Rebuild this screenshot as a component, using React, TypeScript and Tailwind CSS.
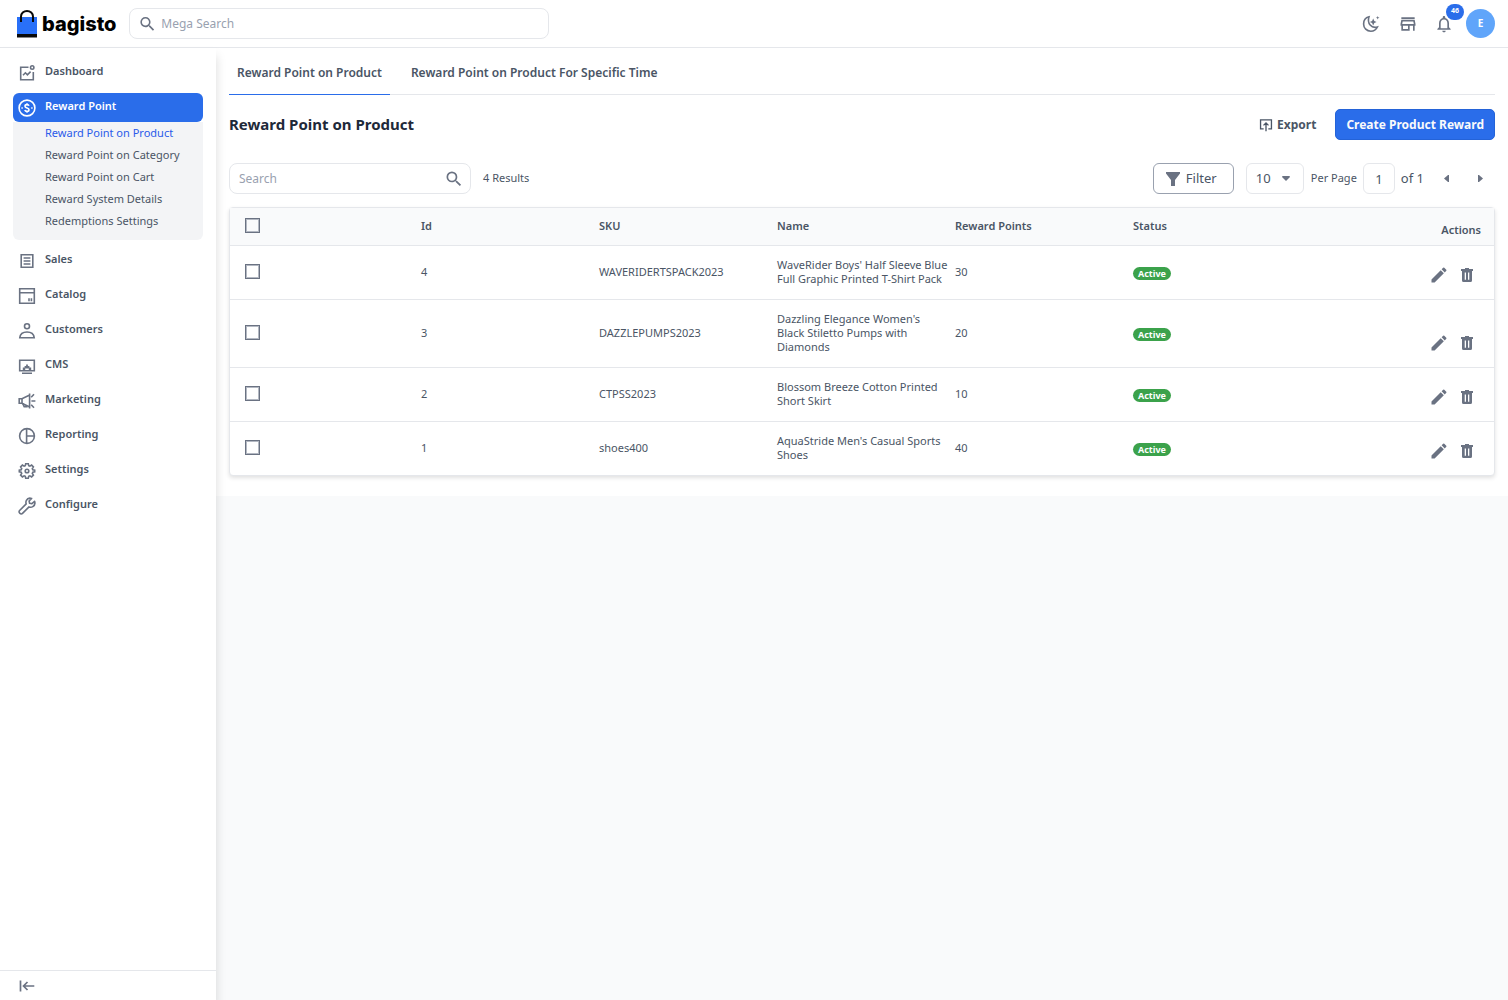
import { type ReactNode } from 'react';
import { MdEdit, MdNotificationsNone, MdOutlineStore, MdSearch } from 'react-icons/md';

interface IconProps {
    className?: string;
    children?: ReactNode;
}

function LineIcon({ className = 'size-[18px]', children }: IconProps) {
    return (
        <svg
            viewBox="0 0 18 18"
            fill="none"
            stroke="currentColor"
            strokeWidth="1.6"
            className={`shrink-0 ${className}`}
            aria-hidden="true"
        >
            {children}
        </svg>
    );
}

const menuIcons: Record<string, ReactNode> = {
    dashboard: (
        <>
            <path d="M10.500 3.200H2.700v12.600h12.600V8" />
            <path d="m5 11.200 2.400-2.400 2 2L12.600 7.600" />
            <circle cx="14.200" cy="3.500" r="1.700" />
        </>
    ),
    reward: (
        <>
            <circle cx="9" cy="9" r="7.900" />
            <path d="M11 6.800c-.3-.9-1-1.200-2-1.200-1.200 0-2 .6-2 1.600 0 2.300 4 1.200 4 3.500 0 1-.8 1.700-2 1.700-1.100 0-1.900-.4-2.200-1.300M9 4.200v1.400M9 12.400v1.400" />
            <path d="M3.400 9h1.400M13.200 9h1.400" />
        </>
    ),
    sales: (
        <>
            <path d="M3.200 2.700h11.600v12.600H3.200z" />
            <path d="M5.600 6h6.800M5.600 9h6.800M5.600 12h6.800" />
        </>
    ),
    catalog: (
        <>
            <path d="M1.700 1.700h14.600v14.600H1.700zM1.700 5.700h14.600" />
            <path d="M11 11.200v3M13.400 11.200v3" />
        </>
    ),
    customers: (
        <>
            <circle cx="9" cy="4.200" r="2.500" />
            <path d="M1.800 15.700c.4-3.600 3.200-5.700 7.200-5.700s6.800 2.100 7.200 5.700z" />
        </>
    ),
    cms: (
        <>
            <path d="M1.700 3.200h14.600v10.600H1.700zM4 16.300h10" />
            <path
                d="M4.800 13.200v-2.800h1.800V9h1.500V7.600h1.800V9h1.500v1.400h1.800v2.800h-2.400v-1.600H7.200v1.600z"
                fill="currentColor"
                stroke="none"
            />
        </>
    ),
    marketing: (
        <>
            <path d="M11.600 1.500v15M11.200 3.300 4 6.800H1.200v4.400H4l7.200 3.500" />
            <path d="M4 7v4M4.700 11.400l1.500 3.300h2.400l-.6-1.500" />
            <path d="M13.400 9h4M13.200 5.200l2.800-3M13.200 12.800l2.800 3" />
        </>
    ),
    reporting: (
        <>
            <circle cx="9" cy="9" r="7.400" />
            <path d="M8.600 1.600v14.800M8.600 9h7.600" />
        </>
    ),
    settings: (
        <>
            <path d="M7.700 1.700h2.600l.4 2 1.200.5 1.700-1.100 1.800 1.800-1.100 1.700.5 1.200 1.900.4v1.600l-1.900.4-.5 1.200 1.100 1.700-1.800 1.800-1.700-1.100-1.200.5-.4 2H7.700l-.4-2-1.200-.5-1.700 1.100-1.800-1.800 1.100-1.700-.5-1.200-1.900-.4V8.200l1.900-.4.5-1.200-1.100-1.700 1.800-1.800 1.700 1.100 1.200-.5z" />
            <circle cx="9" cy="9" r="1.800" />
        </>
    ),
    configure: (
        <path
            d="M16.600 4.300 13.900 6.700l-2.300-.5-.5-2.200L13.600 1.400c-2.200-.7-4.300.1-5.200 1.900-.6 1.200-.6 2.500-.2 3.600L1.600 13.500c-.7.700-.7 1.800 0 2.500l.4.4c.7.700 1.800.7 2.500 0l6.500-6.500c1.200.5 2.600.4 3.800-.3 1.700-1 2.500-3.200 1.800-5.300z"
            strokeLinejoin="round"
        />
    ),
};

const subItems = [
    'Reward Point on Product',
    'Reward Point on Category',
    'Reward Point on Cart',
    'Reward System Details',
    'Redemptions Settings',
];

const menu = [
    { label: 'Dashboard', icon: 'dashboard' },
    { label: 'Reward Point', icon: 'reward', children: subItems },
    { label: 'Sales', icon: 'sales' },
    { label: 'Catalog', icon: 'catalog' },
    { label: 'Customers', icon: 'customers' },
    { label: 'CMS', icon: 'cms' },
    { label: 'Marketing', icon: 'marketing' },
    { label: 'Reporting', icon: 'reporting' },
    { label: 'Settings', icon: 'settings' },
    { label: 'Configure', icon: 'configure' },
];

const rewards = [
    { id: 4, sku: 'WAVERIDERTSPACK2023', name: "WaveRider Boys' Half Sleeve Blue Full Graphic Printed T-Shirt Pack", points: 30 },
    { id: 3, sku: 'DAZZLEPUMPS2023', name: "Dazzling Elegance Women's Black Stiletto Pumps with Diamonds", points: 20 },
    { id: 2, sku: 'CTPSS2023', name: 'Blossom Breeze Cotton Printed Short Skirt', points: 10 },
    { id: 1, sku: 'shoes400', name: "AquaStride Men's Casual Sports Shoes", points: 40 },
];

function Logo() {
    return (
        <a href="#" className="flex items-center gap-1 text-black">
            <svg viewBox="0 0 22 28" className="h-7 w-[22px]" aria-hidden="true">
                <path d="M1 7h20v17H1z" fill="#2970f8" />
                <path d="M1 24h20v3.500H1z" fill="#0a0a0a" />
                <path d="M5 12V6.500a6 5.500 0 0 1 12 0V12" fill="none" stroke="#0a0a0a" strokeWidth="2" />
            </svg>
            <span className="font-[Inter,sans-serif] text-xl font-extrabold">bagisto</span>
        </a>
    );
}

function Header() {
    return (
        <header className="flex h-12 items-center justify-between border-b border-gray-200 bg-white pr-[13px] pl-4">
            <div className="flex items-center gap-[13px]">
                <Logo />
                <label className="flex h-[31px] w-[420px] items-center gap-1 rounded-lg border border-gray-200 px-2">
                    <MdSearch className="size-5 text-gray-500" />
                    <input
                        type="text"
                        aria-label="Mega Search"
                        placeholder="Mega Search"
                        className="w-full text-xs text-gray-600 outline-none placeholder:text-gray-400"
                    />
                </label>
            </div>

            <div className="flex items-center text-gray-500">
                <button type="button" aria-label="Dark mode" className="mr-[18px]">
                    <LineIcon>
                        <path d="M7 1.800C3.600 2.600 1.600 5.500 1.600 9c0 4.200 3.200 7.200 7.200 7.200 3 0 5.400-1.600 6.600-4.200C9.500 13.600 4.800 8.500 7 1.800z" />
                        <path
                            d="m11.200 3.600 1.100 2.300 2.300 1.100-2.300 1.100-1.100 2.300-1.100-2.300L7.800 7l2.300-1.100z"
                            fill="currentColor"
                            stroke="none"
                        />
                        <path d="m15.700 1 .5 1.300 1.300.5-1.300.5-.5 1.300-.5-1.300-1.300-.5 1.300-.5z" fill="currentColor" stroke="none" />
                    </LineIcon>
                </button>
                <button type="button" aria-label="Visit shop" className="mr-4">
                    <MdOutlineStore className="size-5" />
                </button>
                <button type="button" aria-label="Notifications" className="relative mr-3">
                    <MdNotificationsNone className="size-5" />
                    <span className="absolute -top-[10px] left-3 flex h-4 w-[18px] items-center justify-center rounded-full bg-[#2a6dea] text-[7px] font-bold text-white">
                        46
                    </span>
                </button>
                <button
                    type="button"
                    className="size-[29px] rounded-full bg-[#60a5fa] text-[10px] font-bold text-white"
                >
                    E
                </button>
            </div>
        </header>
    );
}

function Sidebar() {
    return (
        <aside className="z-10 flex w-[216px] shrink-0 flex-col justify-between bg-white shadow-[0_8px_10px_rgba(0,0,0,0.15)]">
            <nav className="flex flex-col gap-[6px] px-[13px] pt-[10px]">
                {menu.map((item) => (
                    <div key={item.label}>
                        <a
                            href="#"
                            className={`flex h-[29px] items-center gap-[9px] rounded-md px-[5px] text-[11px] font-semibold ${
                                item.children ? 'bg-[#2a6dea] text-white' : 'text-gray-600'
                            }`}
                        >
                            <LineIcon className={item.children ? 'size-[18px]' : 'size-[18px] text-gray-500'}>
                                {menuIcons[item.icon]}
                            </LineIcon>
                            <span className="pb-[3px]">{item.label}</span>
                        </a>
                        {item.children && (
                            <div className="flex flex-col rounded-b-md bg-gray-100 pb-2 pl-8 text-[11px]">
                                {item.children.map((child, i) => (
                                    <a
                                        key={child}
                                        href="#"
                                        className={`flex h-[22px] items-center ${i === 0 ? 'text-[#2a5bea]' : 'text-gray-600'}`}
                                    >
                                        {child}
                                    </a>
                                ))}
                            </div>
                        )}
                    </div>
                ))}
            </nav>
            <div className="border-t border-gray-200 px-[18px] pt-[6px] pb-[5px] text-gray-500">
                <button type="button" aria-label="Collapse menu" className="block">
                    <LineIcon>
                        <path d="M2.500 3.500v11M16.300 9H5.500M9.500 5 5.500 9l4 4" strokeWidth="1.700" />
                    </LineIcon>
                </button>
            </div>
        </aside>
    );
}

function Toolbar() {
    return (
        <div className="mt-[23px] flex items-center justify-between">
            <div className="flex items-center gap-3">
                <label className="flex h-[31px] w-[242px] items-center rounded-lg border border-gray-200 pr-[6px] pl-[9px]">
                    <input
                        type="text"
                        aria-label="Search"
                        placeholder="Search"
                        className="w-full text-xs text-gray-600 outline-none placeholder:text-gray-400"
                    />
                    <MdSearch className="size-5 shrink-0 text-gray-500" />
                </label>
                <p className="text-[11px]">4 Results</p>
            </div>

            <div className="flex items-center text-[13px]">
                <button
                    type="button"
                    className="flex h-[31px] w-[81px] items-center justify-center gap-[6px] rounded-md border border-gray-400 pr-1"
                >
                    <svg viewBox="0 0 14 14" className="size-[14px] text-gray-500" aria-hidden="true">
                        <path d="M0 0h14v1.600L9 8v6H5V8L0 1.600z" fill="currentColor" />
                    </svg>
                    Filter
                </button>
                <div className="relative ml-3">
                    <select
                        aria-label="Rows per page"
                        className="h-[31px] w-[58px] appearance-none rounded-md border border-gray-200 bg-white pl-[9px]"
                    >
                        <option>10</option>
                        <option>20</option>
                        <option>50</option>
                    </select>
                    <svg
                        viewBox="0 0 8 5"
                        className="pointer-events-none absolute top-[13px] right-[14px] h-[5px] w-2 text-gray-500"
                        aria-hidden="true"
                    >
                        <path d="M0 1q0-1 1-1h6q1 0 1 1L4 5z" fill="currentColor" />
                    </svg>
                </div>
                <label htmlFor="page" className="ml-[7px] text-[11px]">
                    Per Page
                </label>
                <input
                    id="page"
                    type="text"
                    defaultValue="1"
                    className="ml-[6px] h-[31px] w-8 rounded-md border border-gray-200 text-center outline-none"
                />
                <span className="ml-[6px]">of 1</span>
                <button type="button" aria-label="Previous page" className="ml-[15px] flex size-[14px] items-center justify-center">
                    <svg viewBox="0 0 5 7" className="h-[7px] w-[5px] text-gray-500" aria-hidden="true">
                        <path d="M5 0v7H4L0 3.500 4 0z" fill="currentColor" />
                    </svg>
                </button>
                <button type="button" aria-label="Next page" className="mr-2 ml-5 flex size-[14px] items-center justify-center">
                    <svg viewBox="0 0 5 7" className="h-[7px] w-[5px] text-gray-500" aria-hidden="true">
                        <path d="M0 0v7h1l4-3.500L1 0z" fill="currentColor" />
                    </svg>
                </button>
            </div>
        </div>
    );
}

function Checkbox({ label }: { label: string }) {
    return (
        <input
            type="checkbox"
            aria-label={label}
            className="block size-[15px] appearance-none border border-gray-500 shadow-[inset_0_0_0_1px_#b3b8c2] checked:bg-[#2a6dea]"
        />
    );
}

function TrashIcon() {
    return (
        <svg viewBox="0 0 12 14" className="h-[14px] w-3" aria-hidden="true">
            <path
                d="M4 0h4v1h4v2H0V1h4zM1 3h10v9.500q0 1.500-1.500 1.500h-7Q1 14 1 12.500zM3.700 4.500v7.200H5V4.500zM7 4.500v7.200h1.300V4.500z"
                fill="currentColor"
                fillRule="evenodd"
            />
        </svg>
    );
}

function RewardTable() {
    return (
        <div className="mt-[13px] rounded-sm border border-gray-200 bg-white shadow-[0_2px_4px_rgba(0,0,0,0.12)]">
            <table className="w-full table-fixed border-separate border-spacing-0 text-left text-[11px] leading-[14px]">
                <thead>
                    <tr className="h-[38px] bg-gray-50 [&>th]:border-b [&>th]:border-gray-200 [&>th]:pb-[2px] [&>th]:font-semibold">
                        <th className="pl-[15px]">
                            <Checkbox label="Select all" />
                        </th>
                        <th className="pl-[13px]">Id</th>
                        <th className="pl-[13px]">SKU</th>
                        <th className="w-[191px] pl-[13px]">Name</th>
                        <th className="w-[165px]">Reward Points</th>
                        <th className="pl-[13px]">Status</th>
                        <th className="w-[196px] pt-2 pr-[13px] text-right">Actions</th>
                    </tr>
                </thead>
                <tbody>
                    {rewards.map((row) => (
                        <tr
                            key={row.id}
                            className="[&>td]:border-b [&>td]:border-gray-200 last:[&>td]:border-b-0"
                        >
                            <td className="pb-[2px] pl-[15px]">
                                <Checkbox label={`Select ${row.sku}`} />
                            </td>
                            <td className="pb-[2px] pl-[13px]">{row.id}</td>
                            <td className="pb-[2px] pl-[13px]">{row.sku}</td>
                            <td className="pt-3 pr-[5px] pb-[13px] pl-[13px]">{row.name}</td>
                            <td className="pb-[2px]">{row.points}</td>
                            <td className="pl-[13px]">
                                <span className="inline-block rounded-full bg-[#3ba24b] px-[5px] text-[9px] leading-[13px] font-bold text-white">
                                    Active
                                </span>
                            </td>
                            <td className="pr-[21px] pb-[14px] align-bottom">
                                <div className="flex items-center justify-end gap-3 text-gray-500">
                                    <button type="button" aria-label="Edit">
                                        <MdEdit className="size-5" />
                                    </button>
                                    <button type="button" aria-label="Delete">
                                        <TrashIcon />
                                    </button>
                                </div>
                            </td>
                        </tr>
                    ))}
                </tbody>
            </table>
        </div>
    );
}

export default function App() {
    return (
        <div className="flex min-h-screen flex-col bg-gray-50 font-['Noto_Sans',sans-serif] text-gray-600">
            <Header />
            <div className="flex flex-1">
                <Sidebar />
                <main className="min-w-0 flex-1">
                    <div className="bg-white px-[13px] pb-5">
                        {/* Tabs */}
                        <div className="flex gap-[13px] border-b border-gray-200 text-xs font-semibold">
                            <a href="#" className="-mb-px flex h-[47px] items-center border-b border-[#2a6dea] px-2 pt-1">
                                Reward Point on Product
                            </a>
                            <a href="#" className="flex h-[46px] items-center px-2 pt-1">
                                Reward Point on Product For Specific Time
                            </a>
                        </div>

                        {/* Title + actions */}
                        <div className="mt-[14px] flex items-center justify-between">
                            <h1 className="text-[15px] font-bold text-gray-800">Reward Point on Product</h1>
                            <div className="flex items-center gap-[19px] text-xs font-bold">
                                <button type="button" className="flex items-center gap-1">
                                    <LineIcon className="size-[14px]">
                                        <path d="M6 14H2V2.500h14V14h-4M9 17V6.500M5.800 9.500 9 6.300l3.200 3.200" strokeWidth="1.700" />
                                    </LineIcon>
                                    Export
                                </button>
                                <button type="button" className="h-[31px] rounded-[5px] border border-[#2463d8] bg-[#2a6dea] px-[10px] text-gray-50">
                                    Create Product Reward
                                </button>
                            </div>
                        </div>

                        <Toolbar />
                        <RewardTable />
                    </div>
                </main>
            </div>
        </div>
    );
}
